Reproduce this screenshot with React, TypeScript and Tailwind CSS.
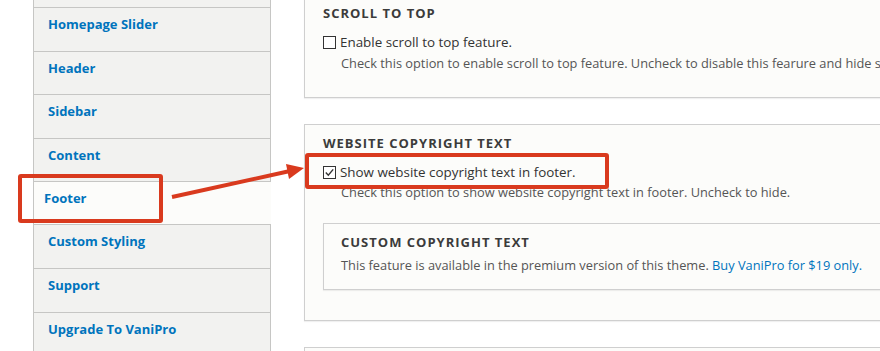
import React from "react";

type Tab = { label: string; h: string; active?: boolean };

// first tab sits mostly above the visible area, its label is out of view
const tabs: Tab[] = [
  { label: "", h: "h-[44px]" },
  { label: "Homepage Slider", h: "h-[44px]" },
  { label: "Header", h: "h-[43px]" },
  { label: "Sidebar", h: "h-[44px]" },
  { label: "Content", h: "h-[43px]" },
  { label: "Footer", h: "h-[43px]", active: true },
  { label: "Custom Styling", h: "h-[44px]" },
  { label: "Support", h: "h-[44px]" },
  { label: "Upgrade To VaniPro", h: "h-[44px]" },
];

function Checkbox({ checked }: { checked?: boolean }) {
  return (
    <svg width="13" height="13" viewBox="0 0 13 13" className="shrink-0">
      <rect x="0.5" y="0.5" width="12" height="12" fill="#fff" stroke="#333" strokeWidth="1" />
      {checked && <path d="M2.8 6.6 L5.3 9.2 L10.2 3.4" fill="none" stroke="#333" strokeWidth="1.4" />}
    </svg>
  );
}

function Legend({ children }: { children: React.ReactNode }) {
  return <div className="text-[13px] leading-[18px] font-bold uppercase tracking-[1px] text-[#3b3b3b]">{children}</div>;
}

export default function App() {
  return (
    <div className="relative w-[880px] h-[351px] overflow-hidden bg-white" style={{ fontFamily: '"Open Sans", "DejaVu Sans", sans-serif' }}>
      <div className="flex">
        {/* vertical tabs */}
        <div className="ml-[33px] w-[238px] mt-[-36px] shrink-0">
          {tabs.map((t, i) => (
            <div
              key={i}
              className={`${t.h} border-b border-[#c6c6c4] border-l ${
                t.active ? "bg-[#fcfcfa] pl-[10px]" : "bg-[#f2f2f0] border-r pl-[14px]"
              } pt-[8px] text-[13px] leading-[16px] font-bold text-[#0074bd]`}
            >
              {t.label}
            </div>
          ))}
        </div>

        {/* settings */}
        <div className="ml-[33px] w-[640px] shrink-0 text-[#333]">
          <div className="mt-[-6px] border border-[#cfcfcf] bg-[#fcfcfa] pt-[9px] pb-[25px] pl-[18px] shadow-[0_1px_1px_rgba(0,0,0,0.06)]">
            <Legend>Scroll to top</Legend>
            <label className="mt-[11px] flex items-center gap-[4px] text-[13.4px] leading-[18px]">
              <Checkbox />
              Enable scroll to top feature.
            </label>
            <p className="mt-[3px] pl-[18px] text-[12.8px] leading-[18px] text-[#555] whitespace-nowrap">
              Check this option to enable scroll to top feature. Uncheck to disable this fearure and hide scroll to top button.
            </p>
          </div>

          <div className="mt-[26px] border border-[#cfcfcf] bg-[#fcfcfa] pt-[9px] pb-[30px] pl-[18px] shadow-[0_1px_1px_rgba(0,0,0,0.06)]">
            <Legend>Website copyright text</Legend>
            <label className="mt-[11px] flex items-center gap-[4px] text-[13.4px] leading-[18px]">
              <Checkbox checked />
              Show website copyright text in footer.
            </label>
            <p className="mt-[2px] pl-[18px] text-[12.8px] leading-[18px] text-[#555]">
              Check this option to show website copyright text in footer. Uncheck to hide.
            </p>
            <div className="mt-[22px] border border-[#cfcfcf] bg-[#fcfcfa] pt-[9px] pb-[15px] pl-[17px] shadow-[0_1px_1px_rgba(0,0,0,0.06)]">
              <Legend>Custom copyright text</Legend>
              <p className="mt-[5px] text-[12.8px] leading-[18px] text-[#555]">
                This feature is available in the premium version of this theme.{" "}
                <a className="text-[#0074bd]">Buy VaniPro for $19 only.</a>
              </p>
            </div>
          </div>

          <div className="mt-[26px] h-[60px] border border-[#cfcfcf] bg-[#fcfcfa]" />
        </div>
      </div>

      {/* annotations */}
      <div className="absolute left-[18px] top-[174px] w-[145px] h-[49px] border-4 border-[#d93a1e] rounded-[3px]" />
      <div className="absolute left-[305px] top-[153px] w-[304px] h-[36px] border-4 border-[#d93a1e] rounded-[3px]" />
      <svg className="absolute left-0 top-0" width="880" height="351">
        <line x1="172" y1="197" x2="290" y2="171" stroke="#d93a1e" strokeWidth="4" />
        <polygon points="304,168 289,179 286,164" fill="#d93a1e" />
      </svg>
    </div>
  );
}
